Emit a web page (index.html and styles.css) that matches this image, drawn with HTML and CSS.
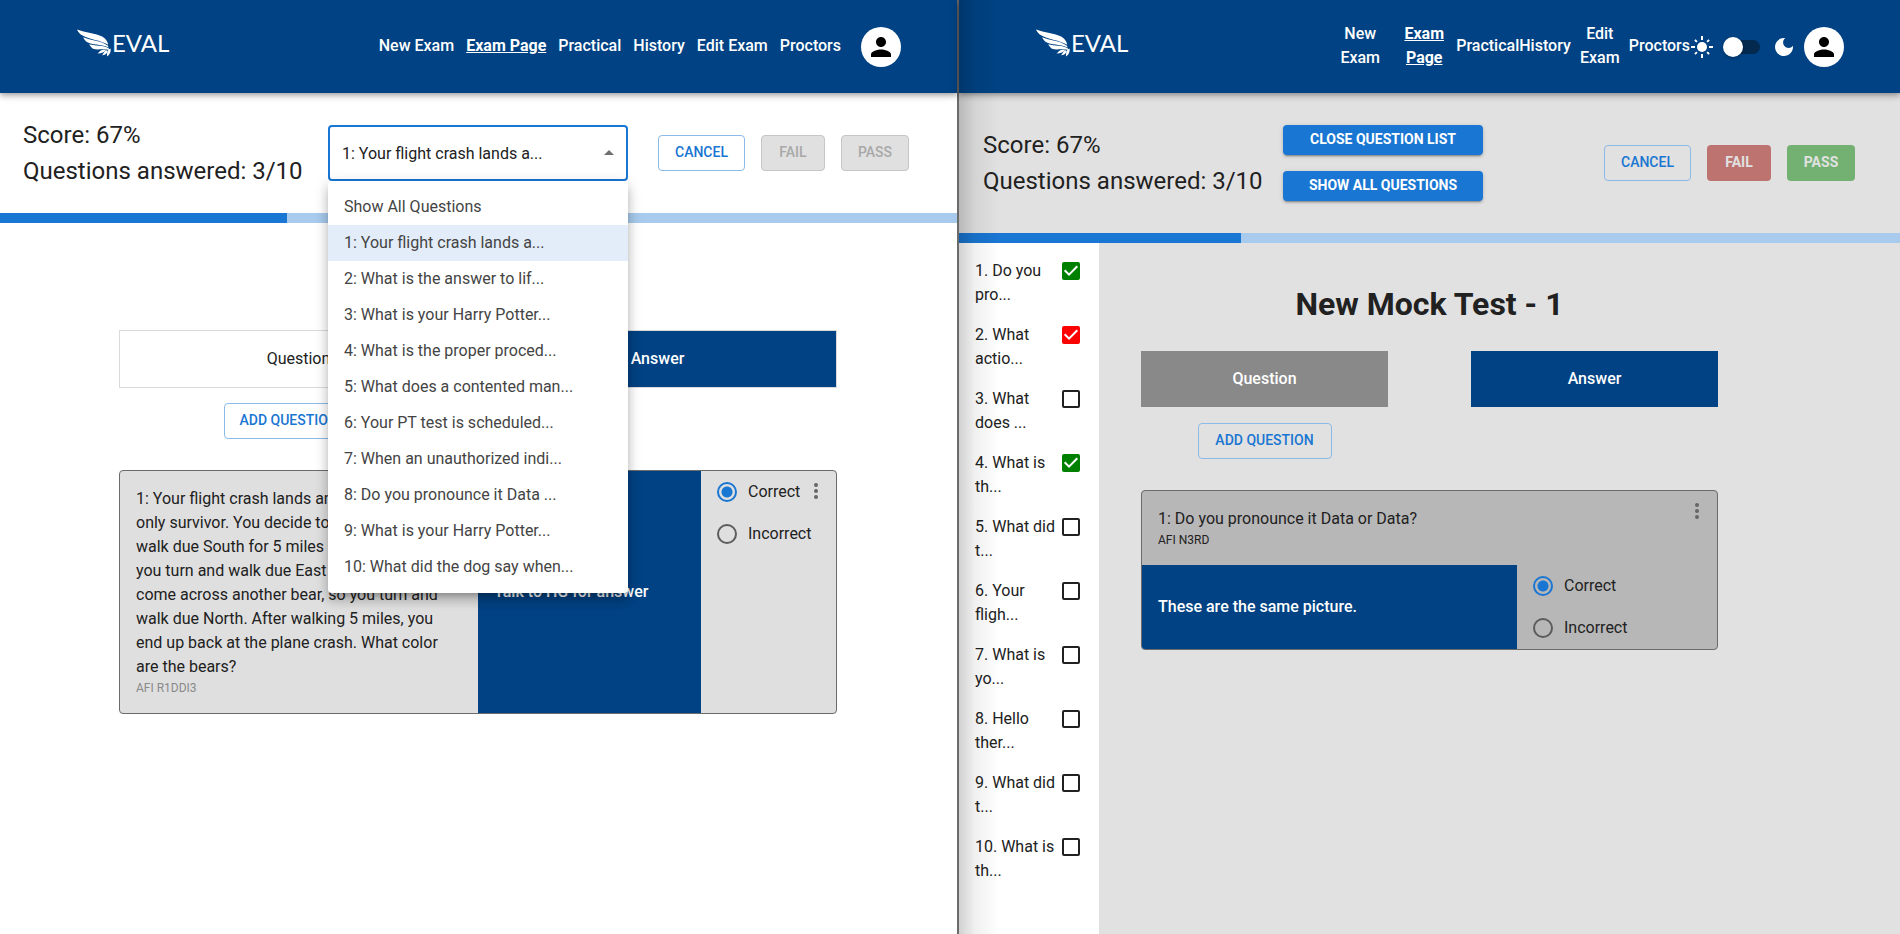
FILE: index.html
```html
<!DOCTYPE html>
<html lang="en">
<head>
<meta charset="utf-8">
<title>Eval - Exam Page</title>
<link rel="stylesheet" href="styles.css">
</head>
<body>
<svg class="sprite" aria-hidden="true">
  <symbol id="wing" viewBox="0 0 100 80">
    <path d="M0 0C24 9 56 11 74 21C85 27 90 36 92 45C68 31 38 30 15 17C8 13 3 7 0 0Z"/>
    <path d="M18 23C40 33 70 32 91 48L93 53C68 43 46 46 29 37C24 33 20 28 18 23Z"/>
    <path d="M36 44C56 50 76 45 94 56L97 61C80 55 60 62 47 57C42 53 38 49 36 44Z"/>
    <path d="M60 71C66 67 68 61 78 60L86 60C82 66 72 71 60 71Z"/>
    <path d="M73 76C79 71 80 62 88 61L90 64C88 71 82 76 73 76Z"/>
    <path d="M88 80C89 72 87 66 93 60L99 56C100 66 97 74 88 80Z"/>
  </symbol>
  <symbol id="person" viewBox="0 0 24 24">
    <path d="M12 12c2.21 0 4-1.79 4-4s-1.79-4-4-4-4 1.79-4 4 1.79 4 4 4zm0 2c-2.67 0-8 1.34-8 4v2h16v-2c0-2.66-5.33-4-8-4z"/>
  </symbol>
  <symbol id="sun" viewBox="0 0 24 24">
    <circle cx="12" cy="12" r="5"/>
    <path d="M12 1v4M12 19v4M1 12h4M19 12h4M4.900 4.900l2 2M17.100 17.100l2 2M4.900 19.100l2-2M17.100 6.900l2-2" fill="none" stroke="currentColor" stroke-width="2"/>
  </symbol>
  <symbol id="moon" viewBox="0 0 24 24">
    <path d="M12 3c-4.970 0-9 4.030-9 9s4.030 9 9 9 9-4.030 9-9c0-.460-.040-.920-.100-1.360-.980 1.370-2.580 2.260-4.400 2.260-2.980 0-5.400-2.420-5.400-5.400 0-1.810.890-3.420 2.260-4.400-.440-.060-.900-.100-1.360-.100z"/>
  </symbol>
  <symbol id="more" viewBox="0 0 24 24">
    <circle cx="12" cy="6" r="2"/><circle cx="12" cy="12" r="2"/><circle cx="12" cy="18" r="2"/>
  </symbol>
</svg>

<div class="split">
  <section class="pane">
    <header class="topbar">
      <a class="logo" href="#"><svg class="wing"><use href="#wing"/></svg>EVAL</a>
      <nav class="nav">
        <a href="#">New Exam</a>
        <a class="current" href="#">Exam Page</a>
        <a href="#">Practical</a>
        <a href="#">History</a>
        <a href="#">Edit Exam</a>
        <a href="#">Proctors</a>
      </nav>
      <button class="avatar" type="button" aria-label="Account"><svg><use href="#person"/></svg></button>
    </header>

    <div class="status">
      <div class="score">
        <p>Score: 67%</p>
        <p>Questions answered: 3/10</p>
      </div>
      <div class="picker">
        <select class="picker-field" aria-label="Question">
          <option>1: Your flight crash lands a...</option>
        </select>
        <ul class="menu">
          <li>Show All Questions</li>
          <li class="selected">1: Your flight crash lands a...</li>
          <li>2: What is the answer to lif...</li>
          <li>3: What is your Harry Potter...</li>
          <li>4: What is the proper proced...</li>
          <li>5: What does a contented man...</li>
          <li>6: Your PT test is scheduled...</li>
          <li>7: When an unauthorized indi...</li>
          <li>8: Do you pronounce it Data ...</li>
          <li>9: What is your Harry Potter...</li>
          <li>10: What did the dog say when...</li>
        </ul>
      </div>
      <div class="actions">
        <button class="btn outlined cancel" type="button">CANCEL</button>
        <button class="btn disabled fail" type="button" disabled>FAIL</button>
        <button class="btn disabled pass" type="button" disabled>PASS</button>
      </div>
    </div>
    <div class="progress"><div class="progress-value" style="width: 30%"></div></div>

    <main class="exam exam-light">
      <div class="heads">
        <div class="head head-plain">Question</div>
        <div class="head head-answer">Answer</div>
      </div>
      <div class="add-row"><button class="btn outlined" type="button">ADD QUESTION</button></div>
      <article class="card card-columns">
        <div class="prompt">
          <p>1: Your flight crash lands and you're the<br>only survivor. You decide to explore. You<br>walk due South for 5 miles and see a bear,<br>you turn and walk due East for 5 miles,<br>come across another bear, so you turn and<br>walk due North. After walking 5 miles, you<br>end up back at the plane crash. What color<br>are the bears?</p>
          <p class="ref">AFI R1DDI3</p>
        </div>
        <div class="reply">Talk to HG for answer</div>
        <div class="grade">
          <label><input type="radio" name="grade-a" checked>Correct</label>
          <label><input type="radio" name="grade-a">Incorrect</label>
          <button class="more" type="button" aria-label="More"><svg><use href="#more"/></svg></button>
        </div>
      </article>
    </main>
  </section>

  <div class="divider"></div>

  <section class="pane pane-gray">
    <header class="topbar">
      <a class="logo" href="#"><svg class="wing"><use href="#wing"/></svg>EVAL</a>
      <nav class="nav nav-tight">
        <a class="wrap" href="#">New<br>Exam</a>
        <a class="wrap current" href="#">Exam<br>Page</a>
        <a href="#">Practical</a>
        <a href="#">History</a>
        <a class="wrap narrow" href="#">Edit<br>Exam</a>
        <a href="#">Proctors</a>
      </nav>
      <div class="theme">
        <svg><use href="#sun"/></svg>
        <input class="switch" type="checkbox" aria-label="Dark mode">
        <svg><use href="#moon"/></svg>
      </div>
      <button class="avatar" type="button" aria-label="Account"><svg><use href="#person"/></svg></button>
    </header>

    <div class="status">
      <div class="score">
        <p>Score: 67%</p>
        <p>Questions answered: 3/10</p>
      </div>
      <div class="list-buttons">
        <button class="btn contained" type="button">CLOSE QUESTION LIST</button>
        <button class="btn contained" type="button">SHOW ALL QUESTIONS</button>
      </div>
      <div class="actions">
        <button class="btn outlined cancel" type="button">CANCEL</button>
        <button class="btn red fail" type="button">FAIL</button>
        <button class="btn green pass" type="button">PASS</button>
      </div>
    </div>
    <div class="progress"><div class="progress-value" style="width: 30%"></div></div>

    <div class="body">
      <aside class="questions">
        <label><span>1. Do you pro...</span><input class="right" type="checkbox" checked></label>
        <label><span>2. What actio...</span><input class="wrong" type="checkbox" checked></label>
        <label><span>3. What does ...</span><input type="checkbox"></label>
        <label><span>4. What is th...</span><input class="right" type="checkbox" checked></label>
        <label><span>5. What did t...</span><input type="checkbox"></label>
        <label><span>6. Your fligh...</span><input type="checkbox"></label>
        <label><span>7. What is yo...</span><input type="checkbox"></label>
        <label><span>8. Hello ther...</span><input type="checkbox"></label>
        <label><span>9. What did t...</span><input type="checkbox"></label>
        <label><span>10. What is th...</span><input type="checkbox"></label>
      </aside>
      <main class="exam exam-gray">
        <h1>New Mock Test - 1</h1>
        <div class="heads heads-apart">
          <div class="head head-question">Question</div>
          <div class="head head-answer">Answer</div>
        </div>
        <div class="add-row"><button class="btn outlined" type="button">ADD QUESTION</button></div>
        <article class="card card-stacked">
          <div class="prompt">
            <p>1: Do you pronounce it Data or Data?</p>
            <p class="ref">AFI N3RD</p>
            <button class="more" type="button" aria-label="More"><svg><use href="#more"/></svg></button>
          </div>
          <div class="reply">These are the same picture.</div>
          <div class="grade">
            <label><input type="radio" name="grade-b" checked>Correct</label>
            <label><input type="radio" name="grade-b">Incorrect</label>
          </div>
        </article>
      </main>
    </div>
  </section>
</div>
</body>
</html>
```
FILE: styles.css
```css
* { box-sizing: border-box; }

body {
  margin: 0;
  font: 400 16px/24px Roboto, "Liberation Sans", sans-serif;
  color: #212121;
  background: #fff;
}

p, ul, h1 { margin: 0; padding: 0; }
ul { list-style: none; }
a { color: inherit; text-decoration: none; }
button, select, input { font: inherit; color: inherit; margin: 0; }
svg { display: block; flex: none; fill: currentColor; }
.sprite { position: absolute; width: 0; height: 0; }

.split {
  display: grid;
  grid-template-columns: 957fr 2px 941fr;
  min-height: 100vh;
}
.pane { display: flex; flex-direction: column; min-width: 0; }
.pane-gray { position: relative; background: #e1e1e1; }
.divider { background: #6b6b6b; }
.pane-gray::after {
  content: "";
  position: absolute;
  z-index: 3;
  inset: 0 auto 0 0;
  width: 40px;
  background: linear-gradient(to right, rgba(0, 0, 0, .18), rgba(0, 0, 0, .06) 40%, transparent);
  pointer-events: none;
}

/* Top bar */
.topbar {
  position: relative;
  z-index: 1;
  display: flex;
  align-items: center;
  height: 93px;
  padding: 0 56px 0 77px;
  background: #004283;
  color: #fff;
  box-shadow: 0 2px 4px -1px rgba(0, 0, 0, .2), 0 4px 5px rgba(0, 0, 0, .14), 0 1px 10px rgba(0, 0, 0, .12);
}
.logo {
  display: flex;
  align-items: center;
  gap: 1px;
  font: 400 24px/28px Lato, sans-serif;
  padding-bottom: 8px;
}
.wing { width: 34px; height: 28px; }
.nav {
  display: flex;
  align-items: center;
  gap: 12px;
  margin-left: auto;
  padding-bottom: 2px;
  font-weight: 500;
  white-space: nowrap;
}
.nav .current { font-weight: 700; text-decoration: underline; }
.nav-tight { gap: 0; }
.nav .wrap { width: 64px; text-align: center; }
.nav .narrow { width: 58px; }
.theme { display: flex; align-items: center; }
.theme svg { width: 24px; height: 24px; }
.switch {
  appearance: none;
  position: relative;
  width: 34px;
  height: 14px;
  margin: 0 12px;
  border-radius: 7px;
  background: #03294f;
}
.switch::before {
  content: "";
  position: absolute;
  left: -3px;
  top: -3px;
  width: 20px;
  height: 20px;
  border-radius: 50%;
  background: #fff;
  box-shadow: 0 1px 3px rgba(0, 0, 0, .3);
}
.avatar {
  display: grid;
  place-items: center;
  width: 40px;
  height: 40px;
  margin-left: 20px;
  padding: 0;
  border: 0;
  border-radius: 50%;
  background: #fff;
  color: #000;
}
.theme + .avatar { margin-left: 8px; }
.avatar svg { width: 30px; height: 30px; }

/* Status row */
.status {
  display: flex;
  align-items: center;
  padding: 32px 48px 32px 23px;
}
.pane-gray .status { padding: 32px 45px 32px 24px; }
.score {
  width: 305px;
  margin: -8px 0;
  font-size: 24px;
  line-height: 36px;
  white-space: nowrap;
}
.pane-gray .score { width: 300px; }
.picker { position: relative; width: 300px; }
.picker-field {
  appearance: none;
  display: block;
  width: 100%;
  height: 56px;
  padding: 1px 32px 0 12px;
  border: 2px solid #1976d2;
  border-radius: 4px;
  background: #fff;
}
.picker::before {
  content: "";
  position: absolute;
  right: 14px;
  top: 25px;
  border: 5px solid transparent;
  border-top: 0;
  border-bottom-color: #707070;
}
.menu {
  position: absolute;
  z-index: 2;
  top: 100%;
  left: 0;
  right: 0;
  padding: 8px 0;
  border-radius: 4px;
  background: #fff;
  color: #444;
  box-shadow: 0 5px 5px -3px rgba(0, 0, 0, .2), 0 8px 10px 1px rgba(0, 0, 0, .14), 0 3px 14px 2px rgba(0, 0, 0, .12);
}
.menu li { padding: 6px 16px; }
.menu .selected { background: #e3edf9; }
.list-buttons { display: grid; gap: 16px; width: 200px; }
.actions { display: flex; gap: 16px; margin-left: auto; }

.btn {
  height: 36px;
  padding: 0 15px 2px;
  border: 1px solid transparent;
  border-radius: 4px;
  background: none;
  font-size: 14px;
  font-weight: 500;
  line-height: 24px;
  white-space: nowrap;
}
.cancel { width: 87px; }
.fail { width: 64px; }
.pass { width: 68px; }
.outlined { border-color: #8cbae8; color: #1976d2; }
.disabled { border-color: #c6c6c6; background: #e0e0e0; color: #a8a8a8; }
.red { background: #bd7470; color: #e1e1e1; font-weight: 700; }
.green { background: #72b172; color: #e1e1e1; font-weight: 700; }
.contained {
  height: 30px;
  background: #1976d2;
  color: #fff;
  font-weight: 700;
  line-height: 20px;
  box-shadow: 0 3px 1px -2px rgba(0, 0, 0, .2), 0 2px 2px rgba(0, 0, 0, .14), 0 1px 5px rgba(0, 0, 0, .12);
}

.progress { height: 10px; background: #a7caed; }
.progress-value { height: 100%; background: #1976d2; }

/* Question list */
.body { display: flex; flex: 1; }
.questions { width: 140px; padding: 8px 0; background: #fff; }
.questions label {
  display: flex;
  gap: 3px;
  padding: 8px 16px;
}
.questions span { width: 84px; }
.questions input {
  appearance: none;
  flex: none;
  width: 18px;
  height: 18px;
  margin-top: 3px;
  border: 2px solid #212121;
  border-radius: 2px;
}
.questions .right { border: 0; background: #008000; }
.questions .wrong { border: 0; background: #f00; }
.questions input:checked::before {
  content: "";
  display: block;
  width: 18px;
  height: 18px;
  background: #fff;
  clip-path: polygon(39% 78%, 11% 50%, 19% 42%, 39% 62%, 81% 20%, 89% 28%);
}

/* Exam */
.exam { flex: 1; }
.exam-light { padding: 107px 120px 32px 119px; }
.exam-gray { padding: 41px 182px 32px 42px; }
h1 { font-size: 32px; line-height: 40px; font-weight: 700; text-align: center; margin-bottom: 27px; }
.heads, .add-row { display: grid; grid-template-columns: 1fr 1fr; }
.heads-apart, .exam-gray .add-row { gap: 83px; }
.head {
  display: grid;
  place-items: center;
  height: 56px;
  font-weight: 500;
  color: #fff;
}
.exam-light .head { height: 58px; border: 1px solid #dadada; }
.exam-light .head-plain { font-weight: 400; color: #212121; }
.head-answer { background: #004283; background-clip: padding-box; }
.head-question { background: #898989; }
.add-row { padding: 16px 0 31px; }
.exam-light .add-row { padding-top: 15px; }
.add-row .btn { justify-self: center; min-width: 134px; }
.exam-light .add-row .btn { min-width: 150px; text-align: left; }

.card {
  position: relative;
  display: grid;
  overflow: hidden;
  border: 1px solid #6b6b6b;
  border-radius: 4px;
  background: #dfdfdf;
}
.exam-gray .card { background: #b7b7b7; }
.card-columns { grid-template-columns: 358fr 223fr 135fr; }
.card-stacked { grid-template-columns: 375fr 200fr; }
.card-stacked .prompt { grid-column: 1 / -1; }
.prompt { padding: 16px; white-space: nowrap; min-width: 0; }
.ref { font-size: 12px; line-height: 18px; }
.exam-light .ref { color: #8a8a8a; }
.reply {
  display: flex;
  align-items: center;
  padding: 16px;
  background: #004283;
  color: #fff;
  font-weight: 500;
}
.grade { padding-left: 16px; }
.grade label { display: flex; align-items: center; gap: 11px; height: 42px; }
.grade input {
  appearance: none;
  flex: none;
  width: 20px;
  height: 20px;
  border: 2px solid #5c5c5c;
  border-radius: 50%;
}
.grade input:checked {
  border-color: #1976d2;
  background: radial-gradient(circle, #1976d2 5px, transparent 6px);
}
.more {
  position: absolute;
  top: 8px;
  right: 8px;
  padding: 0;
  border: 0;
  background: none;
  color: #666;
}
.more svg { width: 24px; height: 24px; }
```
